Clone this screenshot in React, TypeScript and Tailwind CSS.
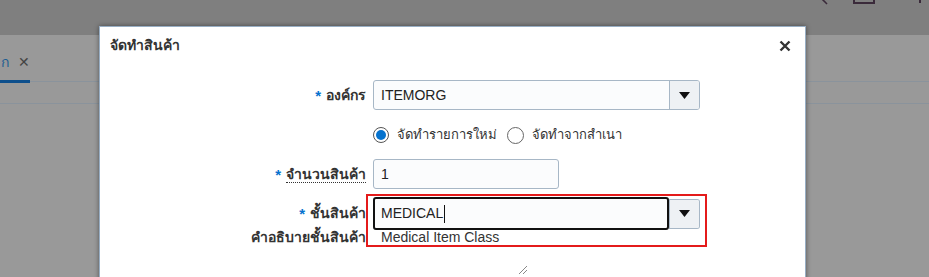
import React from "react";

const THAI = { fontFamily: '"Liberation Sans", "Noto Sans", Tahoma, sans-serif' };

function Req() {
  return <span className="mr-[5px] text-[15px] font-bold leading-none text-[#0572ce]">*</span>;
}

function DropButton() {
  return (
    <div className="flex h-full w-[30px] items-center justify-center border-l border-[#a7b7c6] bg-[#eef1f4]">
      <svg width="11" height="7" viewBox="0 0 11 7">
        <path d="M0 0 H11 L5.5 7 Z" fill="#111" />
      </svg>
    </div>
  );
}

export default function App() {
  return (
    <div className="relative h-[277px] w-[929px] overflow-hidden bg-[#999999]" style={THAI}>
      {/* underlying page, dimmed */}
      <div className="h-[35px] bg-[#7f7f7f]">
        <div className="flex justify-end gap-[24px] pr-[8px]">
          <svg width="10" height="6" viewBox="0 0 10 6" className="-mt-[1px]">
            <path d="M3 0 L8 5" stroke="#3a2a3a" strokeWidth="1.6" fill="none" />
          </svg>
          <div className="-mt-[4px] mr-[20px] h-[8px] w-[22px] border-2 border-[#3a2a3a]" />
          <div className="-mt-[3px] h-[6px] w-[2px] bg-[#3a2a3a]" />
        </div>
      </div>
      <div className="flex h-[47px] items-end border-b border-[#8a939c]">
        <div className="flex items-center gap-[9px] pb-[8px]">
          <span className="ml-[1px] text-[14px] text-[#1d5d92]">ก</span>
          <span className="text-[14px] text-[#444]">✕</span>
        </div>
      </div>
      <div className="relative">
        <div className="absolute -top-[2px] left-0 h-[3px] w-[30px] bg-[#0d4f8c]" />
      </div>
      <div className="h-[22px] border-b border-[#8a939c]" />

      {/* dialog */}
      <div className="absolute left-[99px] top-[26px] h-[270px] w-[707px] border border-[#98aec4] bg-white shadow-[0_0_5px_rgba(0,0,0,0.45)]">
        <div className="flex items-center justify-between pl-[10px] pr-[14px] pt-[8px]">
          <span className="text-[14px] font-bold text-[#333]">จัดทำสินค้า</span>
          <svg width="12" height="12" viewBox="0 0 12 12">
            <path d="M1.5 1.5 L10.5 10.5 M10.5 1.5 L1.5 10.5" stroke="#333" strokeWidth="2.4" />
          </svg>
        </div>

        <div className="mt-[24px] grid grid-cols-[266px_auto] items-center gap-x-[7px] text-[14px]">
          {/* organisation */}
          <div className="flex items-center justify-end font-bold text-[#333]">
            <Req />
            องค์กร
          </div>
          <div className="flex h-[30px] w-[327px] overflow-hidden rounded-[3px] border border-[#a7b7c6] bg-[#fbfcfd]">
            <div className="flex flex-1 items-center pl-[7px] text-[14px] text-[#222]">ITEMORG</div>
            <DropButton />
          </div>

          {/* mode radios */}
          <div />
          <div className="mt-[10px] flex h-[30px] items-center text-[13px] text-[#333]">
            <span className="flex h-[16px] w-[16px] items-center justify-center rounded-full border border-[#555]">
              <span className="h-[10px] w-[10px] rounded-full bg-[#0572ce]" />
            </span>
            <span className="ml-[8px]">จัดทำรายการใหม่</span>
            <span className="ml-[10px] h-[17px] w-[17px] rounded-full border border-[#666]" />
            <span className="ml-[8px]">จัดทำจากสำเนา</span>
          </div>

          {/* quantity */}
          <div className="mt-[9px] flex items-center justify-end font-bold text-[#333]">
            <Req />
            <span className="border-b border-dotted border-[#333] leading-[16px]">จำนวนสินค้า</span>
          </div>
          <div className="mt-[9px] flex h-[30px] w-[186px] items-center rounded-[3px] border border-[#a7b7c6] bg-[#fbfcfd] pl-[7px] text-[#222]">
            1
          </div>

          {/* class */}
          <div className="mt-[8px] flex items-center justify-end font-bold text-[#333]">
            <Req />
            ชั้นสินค้า
          </div>
          <div className="mt-[8px] flex h-[33px] w-[327px] items-center">
            <div className="flex h-full w-[297px] items-center rounded-[3px] border-2 border-[#111] bg-[#fbfcfd] pl-[6px] text-[#222]">
              MEDICAL<span className="ml-px h-[18px] w-px bg-[#111]" />
            </div>
            <div className="h-[30px] overflow-hidden rounded-r-[3px] border border-l-0 border-[#a7b7c6]">
              <DropButton />
            </div>
          </div>

          <div className="-mt-[3px] text-right font-bold text-[#333]">คำอธิบายชั้นสินค้า</div>
          <div className="-mt-[3px] pl-[8px] text-[#333]">Medical Item Class</div>
        </div>

        {/* highlight annotation */}
        <div className="absolute left-[266px] top-[167px] h-[53px] w-[341px] border-2 border-[#e41b1b]" />

        {/* resize grip */}
        <svg width="10" height="10" viewBox="0 0 10 10" className="absolute left-[418px] top-[238px]">
          <path d="M1 9 L9 1 M5 9 L9 5" stroke="#888" strokeWidth="1" />
        </svg>
      </div>
    </div>
  );
}
